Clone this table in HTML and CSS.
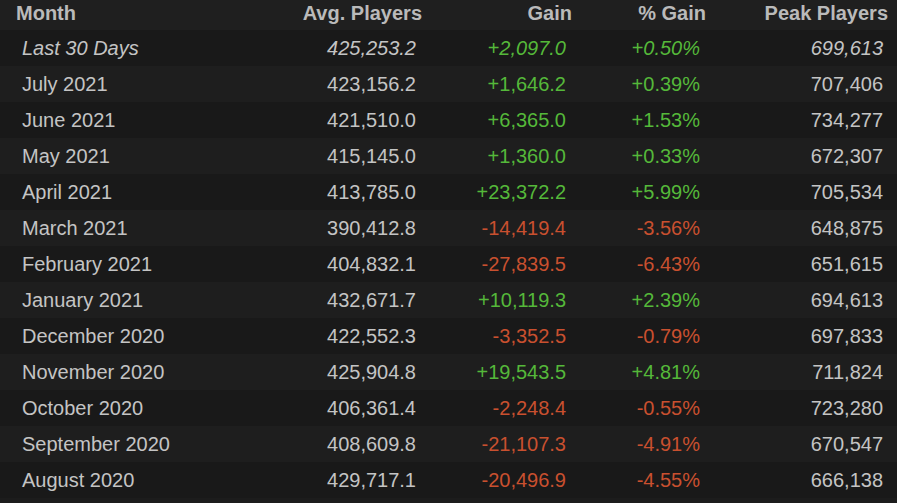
FILE: index.html
```
<!DOCTYPE html>
<html>
<head>
<meta charset="utf-8">
<link rel="stylesheet" href="styles.css">
</head>
<body>
<table class="stats">
  <colgroup>
    <col class="c-month"><col class="c-avg"><col class="c-gain"><col class="c-pct"><col class="c-peak">
  </colgroup>
  <thead>
    <tr><th class="left">Month</th><th>Avg. Players</th><th>Gain</th><th>% Gain</th><th class="last">Peak Players</th></tr>
  </thead>
  <tbody>
    <tr class="recent"><td class="left">Last 30 Days</td><td>425,253.2</td><td class="up">+2,097.0</td><td class="up">+0.50%</td><td class="last">699,613</td></tr>
    <tr><td class="left">July 2021</td><td>423,156.2</td><td class="up">+1,646.2</td><td class="up">+0.39%</td><td class="last">707,406</td></tr>
    <tr><td class="left">June 2021</td><td>421,510.0</td><td class="up">+6,365.0</td><td class="up">+1.53%</td><td class="last">734,277</td></tr>
    <tr><td class="left">May 2021</td><td>415,145.0</td><td class="up">+1,360.0</td><td class="up">+0.33%</td><td class="last">672,307</td></tr>
    <tr><td class="left">April 2021</td><td>413,785.0</td><td class="up">+23,372.2</td><td class="up">+5.99%</td><td class="last">705,534</td></tr>
    <tr><td class="left">March 2021</td><td>390,412.8</td><td class="down">-14,419.4</td><td class="down">-3.56%</td><td class="last">648,875</td></tr>
    <tr><td class="left">February 2021</td><td>404,832.1</td><td class="down">-27,839.5</td><td class="down">-6.43%</td><td class="last">651,615</td></tr>
    <tr><td class="left">January 2021</td><td>432,671.7</td><td class="up">+10,119.3</td><td class="up">+2.39%</td><td class="last">694,613</td></tr>
    <tr><td class="left">December 2020</td><td>422,552.3</td><td class="down">-3,352.5</td><td class="down">-0.79%</td><td class="last">697,833</td></tr>
    <tr><td class="left">November 2020</td><td>425,904.8</td><td class="up">+19,543.5</td><td class="up">+4.81%</td><td class="last">711,824</td></tr>
    <tr><td class="left">October 2020</td><td>406,361.4</td><td class="down">-2,248.4</td><td class="down">-0.55%</td><td class="last">723,280</td></tr>
    <tr><td class="left">September 2020</td><td>408,609.8</td><td class="down">-21,107.3</td><td class="down">-4.91%</td><td class="last">670,547</td></tr>
    <tr><td class="left">August 2020</td><td>429,717.1</td><td class="down">-20,496.9</td><td class="down">-4.55%</td><td class="last">666,138</td></tr>
  </tbody>
</table>
</body>
</html>
```
FILE: styles.css
```
html, body {
  margin: 0;
  padding: 0;
  background: #1c1c1c;
}
body {
  font-family: "Liberation Sans", Arial, sans-serif;
  font-size: 20px;
  color: #c4c4c4;
}
.stats {
  width: 897px;
  border-collapse: collapse;
  table-layout: fixed;
}
.c-month { width: 280px; }
.c-avg { width: 148px; }
.c-gain { width: 150px; }
.c-pct { width: 134px; }
.c-peak { width: 185px; }
.stats th {
  height: 26px;
  line-height: 26px;
  padding: 0 6px 4px 0;
  text-align: right;
  font-weight: bold;
  color: #bababa;
  background: #1f1f1f;
  white-space: nowrap;
}
.stats th.left { text-align: left; padding-left: 16px; }
.stats th.last { padding-right: 9px; }
.stats td {
  height: 36px;
  line-height: 36px;
  padding: 0 12px 0 0;
  text-align: right;
  white-space: nowrap;
}
.stats td.left { text-align: left; padding-left: 22px; }
.stats td.last { padding-right: 14px; }
.stats tbody tr:nth-child(odd) { background: #191919; }
.stats tbody tr:nth-child(even) { background: #1e1e1e; }
.stats tr.recent td { font-style: italic; }
.up { color: #55b83a; }
.down { color: #c9502f; }
```
